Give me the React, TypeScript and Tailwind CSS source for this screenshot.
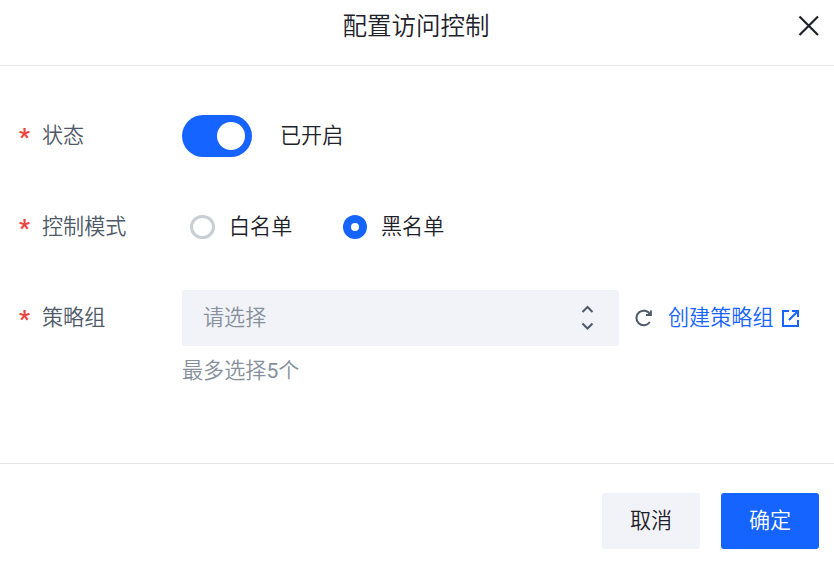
import React from "react";

function Star() {
  return <span className="-ml-px mr-px w-[22px] shrink-0 pt-[7px] font-['Roboto'] text-[24px] font-bold leading-[28px] text-[#f04040]">*</span>;
}

function Label({ children }: { children: React.ReactNode }) {
  return (
    <div className="-mt-[5px] flex w-[162px] shrink-0 items-center">
      <Star />
      <span className="text-[#4e5969]">{children}</span>
    </div>
  );
}

export default function App() {
  return (
    <div className="flex h-[563px] w-[834px] flex-col overflow-hidden bg-white font-['Noto_Sans_CJK_SC',sans-serif] text-[21.1px] font-[350] leading-[30px] text-[#1d2129]">
      <header className="relative flex h-[66px] shrink-0 justify-center border-b border-[#e5e6eb] pt-[7px]">
        <h1 className="-ml-[2px] text-[24.5px] font-[350] leading-[36px]">配置访问控制</h1>
        <svg className="absolute left-[798px] top-[15px] h-[22px] w-[22px]" viewBox="0 0 22 22" fill="none" stroke="#1d2129" strokeWidth="2.200">
          <path d="M1.500 1.500 20 20M20 1.500 1.500 20" />
        </svg>
      </header>
      <main className="h-[397px] shrink-0 pl-5 pt-[49px]">
        <div className="flex h-[42px] items-center">
          <Label>状态</Label>
          <div className="flex h-[42px] w-[70px] items-center justify-end rounded-full bg-[#1664ff] pr-[7px]">
            <div className="h-7 w-7 rounded-full bg-white" />
          </div>
          <span className="-mt-[5px] ml-7">已开启</span>
        </div>
        <div className="mt-[49px] flex h-[42px] items-center">
          <Label>控制模式</Label>
          <span className="ml-2 h-[24px] w-[25px] rounded-full border-[3px] border-[#c9cdd4]" />
          <span className="-mt-[5px] ml-[14px] w-[63px] whitespace-nowrap">白名单</span>
          <span className="ml-[51px] flex h-6 w-6 items-center justify-center rounded-full bg-[#1664ff]">
            <span className="h-2 w-2 rounded-full bg-white" />
          </span>
          <span className="-mt-[5px] ml-[14px]">黑名单</span>
        </div>
        <div className="mt-[42px] flex h-[56px] items-center">
          <Label>策略组</Label>
          <div className="flex h-[56px] w-[437px] shrink-0 items-center justify-between rounded-[3px] bg-[#f2f3f8] pl-[21px] pr-[25px]">
            <span className="-mt-[5px] text-[#86909c]">请选择</span>
            <svg className="h-7 w-[13px]" viewBox="0 0 13 28" fill="none" stroke="#4e5969" strokeWidth="2">
              <path d="m1.500 8 5-5 5 5M1.500 19.500l5 5 5-5" />
            </svg>
          </div>
          <svg className="ml-4 h-[18px] w-[18px]" viewBox="0 0 18 18" fill="none" stroke="#4e5969" strokeWidth="2">
            <path d="M14.800 13A7.300 7.300 0 1 1 15.200 5.600M15.900 1.500v4.600h-4.900" />
          </svg>
          <span className="-mt-[5px] ml-[15px] w-[105px] whitespace-nowrap text-[#1664ff]">创建策略组</span>
          <svg className="ml-2 h-[18px] w-[18px]" viewBox="0 0 18 18" fill="none" stroke="#1664ff" strokeWidth="2">
            <path d="M8 2H2v15h15v-6M11 2h6v6M17 2 8 11" />
          </svg>
        </div>
        <p className="ml-[162px] mt-[8px] text-[#86909c]">最多选择<span className="font-['Roboto'] font-normal">5</span>个</p>
      </main>
      <footer className="flex flex-1 justify-end gap-[21px] border-t border-[#e5e6eb] pr-[15px] pt-[29px]">
        <button className="h-[56px] w-[98px] rounded-[3px] bg-[#f2f3f8] pb-[5px]">取消</button>
        <button className="h-[56px] w-[98px] rounded-[3px] bg-[#1664ff] pb-[5px] text-white">确定</button>
      </footer>
    </div>
  );
}
